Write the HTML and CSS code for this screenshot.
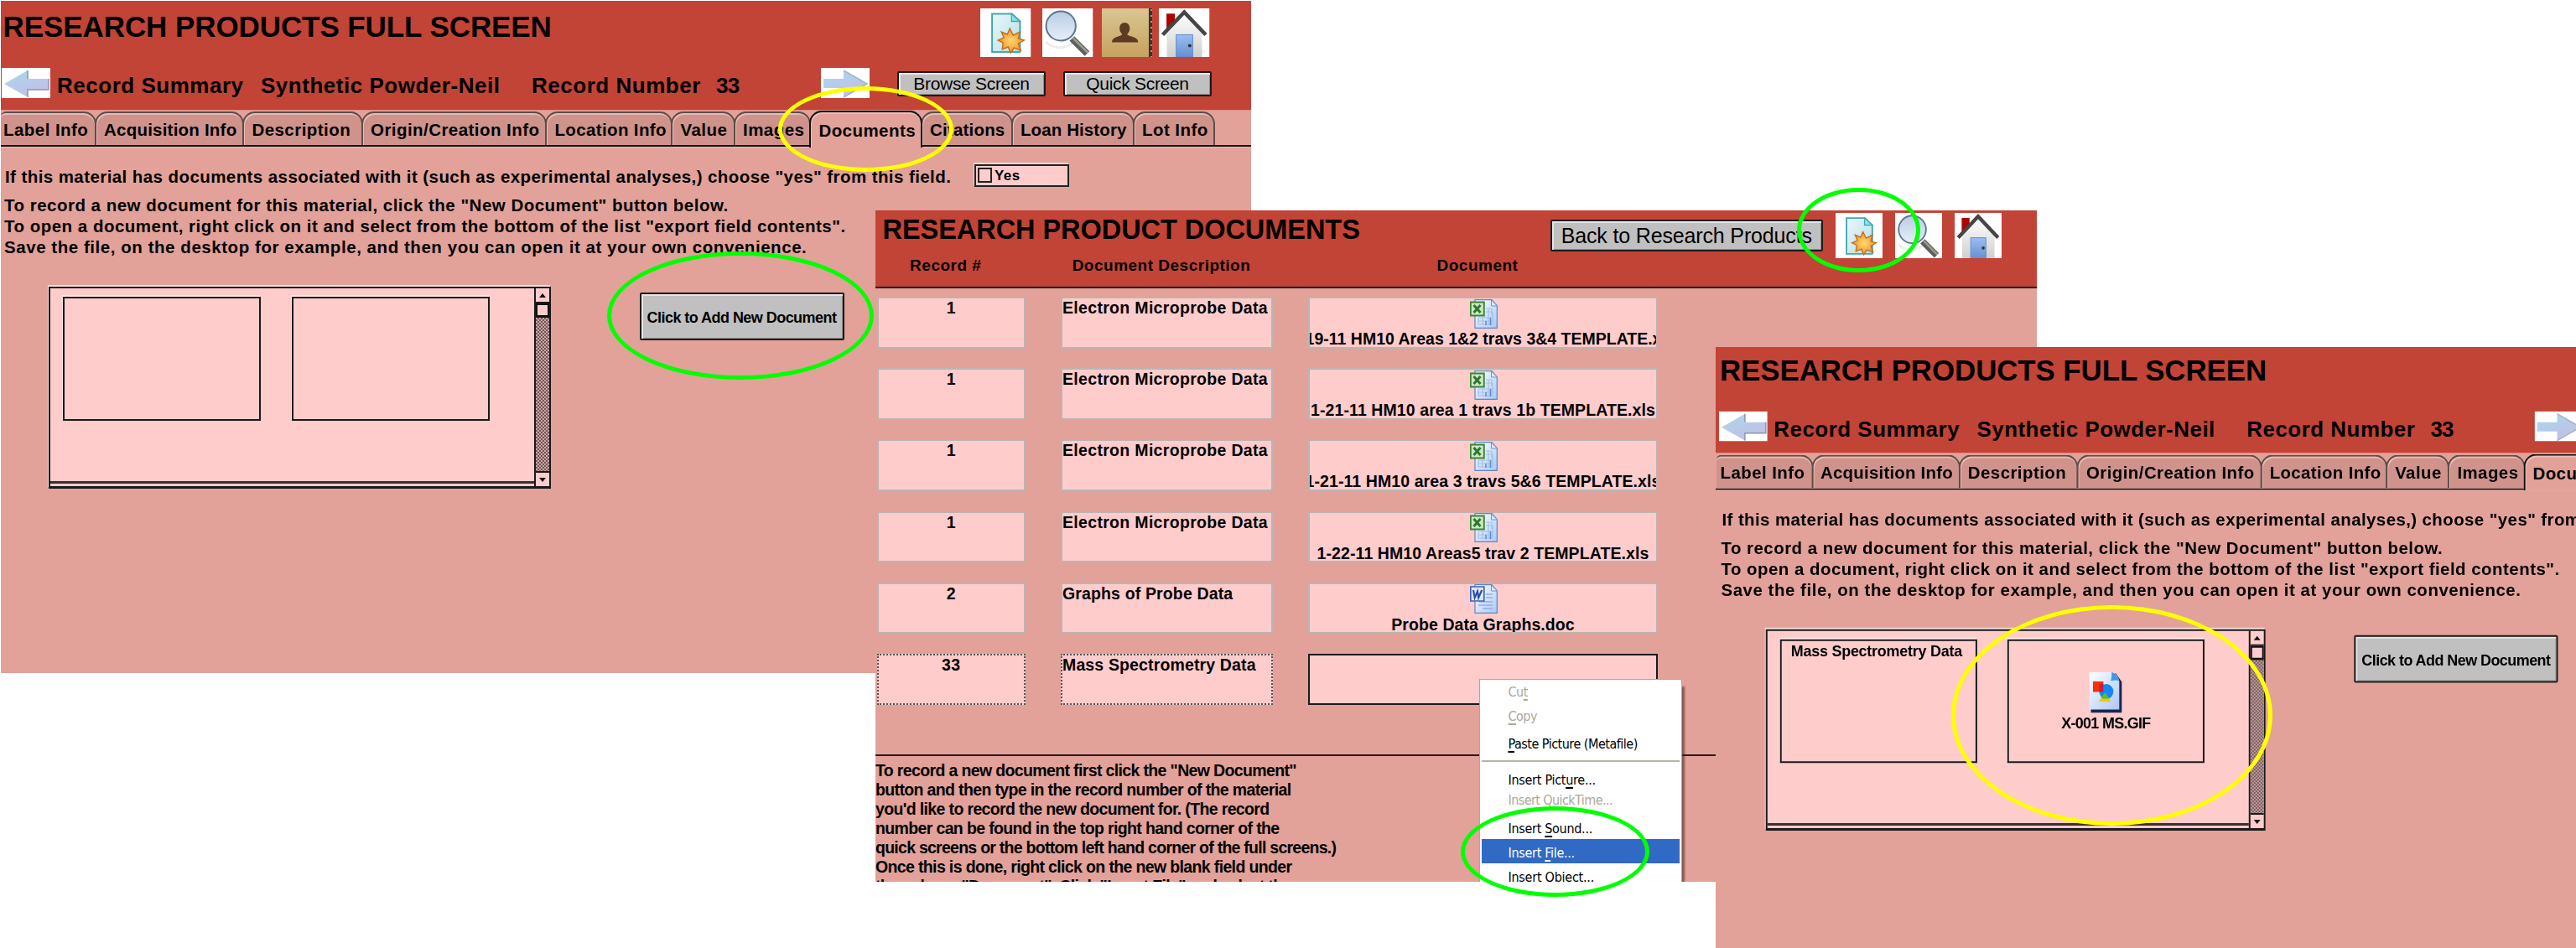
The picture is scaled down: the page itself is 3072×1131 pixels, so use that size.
FILE: index.html
```html
<!DOCTYPE html>
<html lang="en">
<head>
<meta charset="utf-8">
<title>Research Products</title>
<link rel="stylesheet" href="styles.css">
</head>
<body>
<svg class="defs" aria-hidden="true">
  <defs>
    <linearGradient id="arrowFill" x1="0" y1="0" x2=".6" y2="1"><stop offset="0" stop-color="#a9d8ec"/><stop offset="1" stop-color="#c3bfe6"/></linearGradient>
    <linearGradient id="pageFill" x1="0" y1="0" x2="1" y2="1"><stop offset="0" stop-color="#e9f8f9"/><stop offset="1" stop-color="#b5dfe6"/></linearGradient>
    <linearGradient id="lensFill" x1="0" y1="0" x2="0" y2="1"><stop offset="0" stop-color="#b9cde4"/><stop offset="1" stop-color="#e6eff8"/></linearGradient>
    <linearGradient id="tanFill" x1="0" y1="0" x2="0" y2="1"><stop offset="0" stop-color="#dac593"/><stop offset="1" stop-color="#c6a35f"/></linearGradient>
    <linearGradient id="wallFill" x1="0" y1="0" x2="0" y2="1"><stop offset="0" stop-color="#ffffff"/><stop offset="1" stop-color="#cfcfcf"/></linearGradient>
    <linearGradient id="doorFill" x1="0" y1="0" x2="0" y2="1"><stop offset="0" stop-color="#9dbdf2"/><stop offset="1" stop-color="#6590d2"/></linearGradient>
    <linearGradient id="sheetFill" x1="0" y1="0" x2="1" y2="1"><stop offset="0" stop-color="#ffffff"/><stop offset="1" stop-color="#a9c8f5"/></linearGradient>
    <radialGradient id="starFill"><stop offset="0" stop-color="#ffd873"/><stop offset="1" stop-color="#f0952a"/></radialGradient>
  </defs>
  <symbol id="arrow-left" viewBox="0 0 58 36" preserveAspectRatio="none">
    <path fill="#fff" d="M0 0h58v36H0z"/>
    <path d="M3 19 31 3v10h25v13H31v9z" fill="url(#arrowFill)"/>
    <path d="M31 3v10M56 13v13H31v9" fill="none" stroke="#8796b8" stroke-width="1.5"/>
  </symbol>
  <symbol id="arrow-right" viewBox="0 0 58 36" preserveAspectRatio="none">
    <path fill="#fff" d="M0 0h58v36H0z"/>
    <path d="M55 19 27 3v10H3v11h24v11z" fill="url(#arrowFill)"/>
    <path d="M27 3 55 19 27 35" fill="none" stroke="#9fb3cf" stroke-width="1.5"/>
  </symbol>
  <symbol id="new-doc" viewBox="0 0 60 58" preserveAspectRatio="none">
    <path fill="#fff" d="M0 0h60v58H0z"/>
    <path d="M14 6.5h23.500L47 15.500V52H14z" fill="url(#pageFill)" stroke="#45a7b3" stroke-width="2"/>
    <path d="M37 6.500V15.500h10z" fill="#8fe0e4" stroke="#45a7b3" stroke-width="1.300"/>
    <path d="M35 24l4 8 8-4-2 8 7 2-7 4 3 8-8-3-4 6-3-7-7 3 1-8-6-3 7-3-3-7 7 3z" fill="url(#starFill)" stroke="#c96d12" stroke-width="1.400"/>
  </symbol>
  <symbol id="magnifier" viewBox="0 0 60 58" preserveAspectRatio="none">
    <path fill="#fff" d="M0 0h60v58H0z"/>
    <path d="M4 40q10 9 22 6q8-2 13-7" fill="none" stroke="#ededed" stroke-width="3"/>
    <path d="M35 36 53 54" stroke="#5f5f5b" stroke-width="8"/>
    <path d="M36 35 54 53" stroke="#9b9b95" stroke-width="2.500"/>
    <ellipse cx="22" cy="21" rx="17.500" ry="17.500" fill="url(#lensFill)" stroke="#5d7694" stroke-width="2"/>
  </symbol>
  <symbol id="contact" viewBox="0 0 60 58" preserveAspectRatio="none">
    <path fill="url(#tanFill)" d="M0 0h60v58H0z"/>
    <path fill="#3c332b" d="M55.500 0H60v58h-4.500z"/>
    <path d="M58.500 1v57" stroke="#a59a8a" stroke-width="2" stroke-dasharray="2 5"/>
    <path d="M27 17c4 0 6 3 6 7s-2 5-3 7c1 3 13 2 13 9.500H12C12 33 23 34 24 31c-1-2-3-3-3-7s2-7 6-7z" fill="#5c3b22"/>
  </symbol>
  <symbol id="home" viewBox="0 0 60 58" preserveAspectRatio="none">
    <path fill="#fff" d="M0 0h60v58H0z"/>
    <path fill="#b00000" d="M9 6.300h10V25H9z"/>
    <path d="M30 6 51 29v29H9.500V29z" fill="url(#wallFill)"/>
    <path d="M20.500 31.500H40V58H20.500z" fill="url(#doorFill)" stroke="#5e8ad0" stroke-width="1"/>
    <circle cx="36.500" cy="44.500" r="2" fill="#333"/>
    <path d="M4.500 31.500 30 4.500l25.500 27" fill="none" stroke="#454545" stroke-width="4.600"/>
  </symbol>
  <symbol id="sheet" viewBox="0 0 33 35">
    <path d="M6 .7h20l6.300 7V34.300H6z" fill="url(#sheetFill)" stroke="#5f87bf" stroke-width="1.200"/>
    <path d="M25.500 1v7h7z" fill="#dbe9fd" stroke="#6f94c9" stroke-width="1"/>
  </symbol>
  <symbol id="excel" viewBox="0 0 33 35" preserveAspectRatio="none">
    <use href="#sheet" width="33" height="35"/>
    <path d="M10 22h17M10 26h17M10 30h17M19 11h7v8M10 22v8M15 22v8M22 11v20M27 15v15M19 15h8" fill="none" stroke="#a3c0ea" stroke-width="1.200"/>
    <path d="M19 31v-5M24.500 31v-9" stroke="#5e88cc" stroke-width="1.500"/>
    <path d="M.8 3.500h16v16H.8z" fill="#cfe6c4" stroke="#3d8438" stroke-width="1.900"/>
    <path d="m4.500 7 8 9M12.500 7l-8 9" stroke="#2c7a2c" stroke-width="3"/>
  </symbol>
  <symbol id="word" viewBox="0 0 33 35" preserveAspectRatio="none">
    <use href="#sheet" width="33" height="35"/>
    <path d="M19 12h8M19 16h8M11 21h16M10 25h17M15 29h12" stroke="#8fb0e2" stroke-width="1.500"/>
    <path d="M.8 3h16v17H.8z" fill="#dfe8fb" stroke="#3f62b5" stroke-width="1.700"/>
    <path d="m4 7 1.700 9L9 8.500l1.200 7.500L14.200 7" fill="none" stroke="#2c50a8" stroke-width="2.200"/>
  </symbol>
  <symbol id="picture" viewBox="0 0 40 49" preserveAspectRatio="none">
    <path d="M4 2h28l7 10v37H2z" fill="#17264f"/>
    <path d="M0 0h28q7 4 8 11v34H0z" fill="url(#sheetFill)"/>
    <path d="M27 0q0 6-1 11 6-2 10 0Q34 3 27 0z" fill="#3f95f2"/>
    <path fill="#f8300c" d="M4.500 11.500h12.500V24H4.500z"/>
    <ellipse cx="20.500" cy="23.500" rx="8.500" ry="9" fill="#1387fa"/>
    <path d="M12 14.500h5V24h-5z" fill="#c8202c"/>
    <path d="M19 25 26 35.500H11.500z" fill="#f2c800"/>
    <path d="m19 25 4.500 7h-9z" fill="#4fc224"/>
  </symbol>
</svg>

<!-- Full screen record, empty documents portal -->
<section class="window window-first">
  <header class="banner">
    <div class="banner-top">
      <h1 class="title">RESEARCH PRODUCTS FULL SCREEN</h1>
      <svg class="tool tool-new"><use href="#new-doc"/></svg>
      <svg class="tool tool-search"><use href="#magnifier"/></svg>
      <svg class="tool tool-contact"><use href="#contact"/></svg>
      <svg class="tool tool-home"><use href="#home"/></svg>
    </div>
    <div class="record">
      <svg class="nav"><use href="#arrow-left"/></svg>
      <span>Record Summary</span><span>Synthetic Powder-Neil</span><span>Record Number</span><span>33</span>
      <svg class="nav"><use href="#arrow-right"/></svg>
      <button class="btn">Browse Screen</button>
      <button class="btn">Quick Screen</button>
    </div>
  </header>
  <nav class="tabs">
    <a class="tab t-label">Label Info</a><a class="tab t-acq">Acquisition Info</a><a class="tab t-desc">Description</a><a class="tab t-origin">Origin/Creation Info</a><a class="tab t-loc">Location Info</a><a class="tab t-value">Value</a><a class="tab t-images">Images</a><a class="tab t-docs active">Documents</a><a class="tab t-cit">Citations</a><a class="tab t-loan">Loan History</a><a class="tab t-lot">Lot Info</a>
  </nav>
  <main class="body">
    <div class="question">
      <p>If this material has documents associated with it (such as experimental analyses,) choose "yes" from this field.</p>
      <label class="yes"><i class="check"></i>Yes</label>
    </div>
    <div class="notes">
      <p>To record a new document for this material, click the "New Document" button below.</p>
      <p>To open a document, right click on it and select from the bottom of the list "export field contents".</p>
      <p class="wide">Save the file, on the desktop for example, and then you can open it at your own convenience.</p>
    </div>
    <div class="docs">
      <div class="portal">
        <div class="portal-rows"><div class="slot"></div><div class="slot"></div></div>
        <div class="scroll"><i class="up"></i><i class="thumb"></i><i class="track"></i><i class="down"></i></div>
      </div>
      <button class="btn add">Click to Add New Document</button>
    </div>
  </main>
</section>

<!-- Documents list -->
<section class="window window-docs">
  <header class="list-head">
    <div class="list-top">
      <h1 class="title">RESEARCH PRODUCT DOCUMENTS</h1>
      <button class="btn back">Back to Research Products</button>
      <svg class="tool"><use href="#new-doc"/></svg>
      <svg class="tool"><use href="#magnifier"/></svg>
      <svg class="tool"><use href="#home"/></svg>
    </div>
    <div class="cols heads"><span>Record #</span><span>Document Description</span><span>Document</span></div>
  </header>
  <div class="rows">
    <div class="cols"><div class="cell num">1</div><div class="cell">Electron Microprobe Data</div><div class="cell file snug"><svg><use href="#excel"/></svg><span>1-19-11 HM10 Areas 1&amp;2 travs 3&amp;4 TEMPLATE.xls</span></div></div>
    <div class="cols"><div class="cell num">1</div><div class="cell">Electron Microprobe Data</div><div class="cell file"><svg><use href="#excel"/></svg><span>1-21-11 HM10 area 1 travs 1b TEMPLATE.xls</span></div></div>
    <div class="cols"><div class="cell num">1</div><div class="cell">Electron Microprobe Data</div><div class="cell file"><svg><use href="#excel"/></svg><span>1-21-11 HM10 area 3 travs 5&amp;6 TEMPLATE.xls</span></div></div>
    <div class="cols"><div class="cell num">1</div><div class="cell">Electron Microprobe Data</div><div class="cell file"><svg><use href="#excel"/></svg><span>1-22-11 HM10 Areas5 trav 2 TEMPLATE.xls</span></div></div>
    <div class="cols"><div class="cell num">2</div><div class="cell tight">Graphs of Probe Data</div><div class="cell file"><svg><use href="#word"/></svg><span>Probe Data Graphs.doc</span></div></div>
    <div class="cols current"><div class="cell num">33</div><div class="cell tight">Mass Spectrometry Data</div><div class="cell file"></div></div>
  </div>
  <footer class="help">
    <p>To record a new document first click the "New Document"</p>
    <p>button and then type in the record number of the material</p>
    <p>you'd like to record the new document for. (The record</p>
    <p>number can be found in the top right hand corner of the</p>
    <p class="long">quick screens or the bottom left hand corner of the full screens.)</p>
    <p>Once this is done, right click on the new blank field under</p>
    <p>the column "Document". Click "Insert File" and select the</p>
  </footer>
</section>

<!-- Field context menu -->
<div class="menu-layer">
<ul class="menu">
  <li class="off">Cu<u>t</u></li>
  <li class="off"><u>C</u>opy</li>
  <li class="paste"><u>P</u>aste Picture (Metafile)</li>
  <li class="sep"></li>
  <li class="pic">Insert Pict<u>u</u>re...</li>
  <li class="off qt">Insert QuickTime...</li>
  <li class="sound">Insert <u>S</u>ound...</li>
  <li class="hot">Insert <u>F</u>ile...</li>
  <li class="obj">Insert Object...</li>
</ul>
</div>

<!-- Full screen record with the document inserted -->
<section class="window window-last">
  <div class="scaled">
    <header class="banner">
      <div class="banner-top"><h1 class="title">RESEARCH PRODUCTS FULL SCREEN</h1></div>
      <div class="record">
        <svg class="nav"><use href="#arrow-left"/></svg>
        <span>Record Summary</span><span>Synthetic Powder-Neil</span><span>Record Number</span><span>33</span>
        <svg class="nav"><use href="#arrow-right"/></svg>
      </div>
    </header>
    <nav class="tabs">
      <a class="tab t-label">Label Info</a><a class="tab t-acq">Acquisition Info</a><a class="tab t-desc">Description</a><a class="tab t-origin">Origin/Creation Info</a><a class="tab t-loc">Location Info</a><a class="tab t-value">Value</a><a class="tab t-images">Images</a><a class="tab t-docs active">Documents</a>
    </nav>
    <main class="body">
      <div class="question">
        <p>If this material has documents associated with it (such as experimental analyses,) choose "yes" from this field.</p>
      </div>
      <div class="notes">
        <p>To record a new document for this material, click the "New Document" button below.</p>
        <p>To open a document, right click on it and select from the bottom of the list "export field contents".</p>
        <p class="wide">Save the file, on the desktop for example, and then you can open it at your own convenience.</p>
      </div>
      <div class="docs">
        <div class="portal">
          <div class="portal-rows">
            <div class="slot">Mass Spectrometry Data</div>
            <div class="slot slot-file"><svg><use href="#picture"/></svg><span>X-001 MS.GIF</span></div>
          </div>
          <div class="scroll"><i class="up"></i><i class="thumb"></i><i class="track"></i><i class="down"></i></div>
        </div>
        <button class="btn add">Click to Add New Document</button>
      </div>
    </main>
  </div>
</section>

<!-- Highlight rings -->
<i class="ring yellow ring-tab"></i>
<i class="ring green ring-add"></i>
<i class="ring green ring-new"></i>
<i class="ring green ring-menu"></i>
<i class="ring yellow ring-file"></i>
</body>
</html>
```
FILE: styles.css
```css
* { box-sizing: border-box; }
body { margin: 0; width: 3072px; height: 1131px; position: relative; overflow: hidden; background: #fff; color: #000;
  font: bold 20.5px "Liberation Sans", Arial, sans-serif; white-space: nowrap; }
p, h1, ul { margin: 0; padding: 0; }
i { display: block; }
svg { display: block; flex: none; }
.defs { position: absolute; width: 0; height: 0; }

/* windows */
.window { position: absolute; overflow: hidden; background: #e2a299; --gutter: 0px; }
.window-first { left: 1px; top: 1px; width: 1491px; height: 802px; }
.window-docs { left: 1044px; top: 251px; width: 1385px; height: 801px; }
.window-last { left: 2046px; top: 414px; width: 1026px; height: 717px; --gutter: 2.500px; }
.scaled { width: 1491px; margin-top: -3px; transform: scale(.9965); transform-origin: 0 0; }

/* record banner */
.banner { height: 130px; padding: 9px 0 0 var(--gutter); background: #c24436; }
.banner-top { display: flex; height: 58px; }
.title { flex: none; font-size: 35px; line-height: 44px; letter-spacing: -.08px; font-weight: bold; }
.banner .title { width: 1168px; padding-left: 2.500px; }
.tool { width: 60.500px; height: 58px; }
.tool-search { margin-left: 13.500px; }
.tool-contact { margin-left: 10px; }
.tool-home { margin-left: 8px; }
.record { display: grid; grid-template-columns: 67px 243px 323px 220px 123.500px 92.500px 198px 178px; height: 36px; margin-top: 13px;
  font-size: 26px; line-height: 42px; letter-spacing: .52px; }
.record span:nth-of-type(4) { letter-spacing: -.8px; }
.nav { width: 58px; height: 36px; margin-left: 1px; }

.btn { flex: none; padding: 0; border: 2px solid #1c1c1c; background: #c0c0c0; color: #000; font: 21px/24px "Liberation Sans", Arial, sans-serif;
  letter-spacing: -.3px; border-radius: 2px; box-shadow: inset 2px 2px 0 #e6e6e6, inset -1px -1px 0 #8d8d8d; text-align: center; white-space: nowrap; }
.record .btn { width: 177px; height: 30px; margin-top: 3.500px; padding-top: 1px; }

/* tabs */
.tabs { display: flex; align-items: flex-end; height: 45px; padding-left: var(--gutter); border-top: 1px solid #dd8f84;
  background: linear-gradient(#e2a299, #e2a299) 0 0 / 100% 41px no-repeat, linear-gradient(#111, #111) 0 41px / 100% 2px no-repeat, #edbdb6; }
.tab { flex: none; height: 40px; margin: 0 -2px 3px 0; border: 2px solid #5d4d4b; border-bottom: 0; border-radius: 15px 15px 0 0;
  background: #cf938b; box-shadow: inset 1px 2px 0 #e9bcb6; padding-left: 9px; line-height: 39px; letter-spacing: .45px; }
.tabs .tab:first-child { border-left: 0; border-top-left-radius: 6px; padding-left: 3px; box-shadow: inset 0 2px 0 #e9bcb6; }
.window-last .tabs .tab:first-child { margin-left: -2px; padding-left: 5px; width: 116px; }
.tab.active { height: 44px; margin-bottom: 0; background: #e2a299; border-color: #111; padding-top: 2px; z-index: 1; box-shadow: inset 1px 2px 0 #edbdb6; }
.t-label { width: 114px; }
.t-acq { width: 178.400px; letter-spacing: .22px; }
.t-desc { width: 143.600px; }
.t-origin { width: 221.500px; }
.t-loc { width: 152px; letter-spacing: .36px; }
.t-value { width: 76.500px; }
.t-images { width: 92.400px; }
.t-docs { width: 134.600px; }
.t-cit { width: 110px; letter-spacing: .2px; }
.t-loan { width: 147px; letter-spacing: .1px; }
.t-lot { width: 97.700px; }

/* record body */
.body { padding: 20px 0 0 var(--gutter); }
.question { display: flex; height: 27px; line-height: 25px; letter-spacing: .42px; }
.question p { width: 1161px; padding: 2.400px 0 0 5px; }
.yes { display: flex; width: 113px; height: 27px; padding: 2px 0 0 2px; border: 2px solid #222; background: #fcc; box-shadow: -1px -2px 0 #f3d6d2;
  font-size: 17px; line-height: 20px; }
.check { width: 17px; height: 18px; margin-right: 3px; border: 2px solid #222; }
.notes { margin-top: 9.400px; padding-left: 4px; line-height: 25px; letter-spacing: .49px; }
.notes .wide { letter-spacing: .55px; }
.docs { display: flex; gap: 106px; margin: 34.500px 0 0 57px; }
.portal { display: flex; flex: none; width: 598.500px; height: 241px; border: 2px solid #1a1a1a; border-bottom-width: 3px; background: #fcc;
  box-shadow: -1px -2px 0 #f8dfdc; }
.portal-rows { display: flex; gap: 36.500px; flex: 1; height: 233px; padding: 10.500px 0 0 15px; border-bottom: 3px solid #3a3030; }
.slot { flex: none; width: 236px; height: 148px; border: 2px solid #1a1a1a; box-shadow: -1px -2px 0 #ffecea;
  font-size: 18px; line-height: 24px; letter-spacing: -.24px; text-align: center; }
.slot:not(.slot-file) { padding-right: 4px; }
.slot-file { display: flex; flex-direction: column; align-items: center; padding-top: 37px; letter-spacing: -.69px; }
.slot-file svg { width: 40px; height: 49px; margin-bottom: 1px; }
.scroll { display: flex; flex-direction: column; width: 18px; border-left: 2px solid #1a1a1a; }
.up, .down { height: 18px; flex: none; }
.up { border-bottom: 2px solid #1a1a1a; }
.down { border-top: 2px solid #1a1a1a; }
.up::before, .down::before { content: ""; display: block; width: 0; margin: 6px auto 0; border: 4.500px solid transparent; border-top: 0; border-bottom: 5px solid #111; }
.down::before { border-bottom: 0; border-top: 5px solid #111; }
.thumb { height: 17px; border: 2px solid #111; border-width: 2px 2px 3px; }
.track { flex: 1; background: repeating-conic-gradient(#6f5758 0 25%, #cba3a3 0 50%) 0 0 / 4px 4px; }
.add { width: 244px; height: 57px; margin-top: 7px; font-size: 18px; font-weight: bold; letter-spacing: -.54px; padding-top: 4px; }

/* documents list */
.list-head { height: 93px; border-bottom: 2px solid #1a0d0b; background: #c24436; }
.list-top { display: flex; height: 53.400px; }
.list-top .title { width: 804.500px; padding-left: 8.500px; font-size: 32.500px; line-height: 46px; letter-spacing: -.05px; }
.list-top .tool { width: 56px; height: 54.500px; margin: 2.500px 15px 0 0; }
.back { width: 325.500px; height: 38px; margin: 11px 15px 0 0; font-size: 25px; letter-spacing: -.15px; line-height: 34px; }
.cols { display: grid; grid-template-columns: 177.500px 253px 417px; column-gap: 42px; padding-left: 1.500px; }
.heads { margin-left: -6.500px; text-align: center; font-size: 19px; line-height: 25px; letter-spacing: .5px; }
.rows { display: grid; row-gap: 23.700px; padding-top: 10px; font-size: 19.500px; line-height: 22px; }
.cell { height: 61.500px; border: 2px solid #bcb4b1; background: #fcc; letter-spacing: .32px; overflow: hidden; }
.cell.tight { letter-spacing: .14px; }
.num { text-align: center; }
.file { display: flex; flex-direction: column; align-items: center; letter-spacing: .09px; }
.file.snug { letter-spacing: 0; }
.file svg { width: 33px; height: 35px; margin: .5px 0 1.500px 2px; }
.current .cell { border: 2px dotted #555; }
.current .file { border: 2px solid #1a1a1a; }
.help { margin-top: 58.500px; padding-top: 6.400px; border-top: 2px solid #2a1a18; font-size: 19.500px; line-height: 23px; letter-spacing: -.64px; }
.help .long { letter-spacing: -.74px; }

/* context menu, cut off by the bottom edge of the list window */
.menu-layer { position: absolute; left: 1763.500px; top: 809.500px; width: 250px; height: 242.500px; overflow: hidden; }
.menu { width: 242.500px; height: 260px; list-style: none; border: 1.500px solid #aca899; background: #fff; box-shadow: 4px 8px 2px -1px rgba(70, 40, 35, .6);
  font: 16px/29px "DejaVu Sans Condensed", "DejaVu Sans", sans-serif; font-stretch: condensed; letter-spacing: -.5px; }
.menu li { height: 29.300px; margin: 0 2px; padding-left: 32px; }
.menu u { text-underline-offset: 3px; text-decoration-thickness: 1.500px; }
.menu .off { color: #aca899; }
.menu .paste { margin-top: 3.500px; height: 29px; }
.menu .sep { height: 2px; margin-top: 5px; padding: 0; background: #b8b5a8; }
.menu .pic { margin-top: 7.500px; height: 24.300px; letter-spacing: -.28px; }
.menu .qt { height: 29px; letter-spacing: -.58px; }
.menu .sound { margin-top: 4.300px; height: 27.400px; letter-spacing: -.3px; }
.menu .hot { height: 28.600px; padding-top: 1.500px; background: #316ac5; color: #fff; letter-spacing: -.3px; }
.menu .obj { margin-top: 2px; letter-spacing: -.25px; }

/* highlight rings */
.ring { position: absolute; border: 5px solid; border-radius: 50%; }
.yellow { border-color: #ff0; }
.green { border-color: #0f0; }
.ring-tab { left: 927.500px; top: 103px; width: 209px; height: 102px; }
.ring-add { left: 723.500px; top: 300px; width: 318.500px; height: 153px; }
.ring-new { left: 2143px; top: 224px; width: 147px; height: 101px; }
.ring-menu { left: 1742px; top: 962px; width: 225px; height: 108px; }
.ring-file { left: 2327px; top: 722px; width: 382.500px; height: 263px; }
```
